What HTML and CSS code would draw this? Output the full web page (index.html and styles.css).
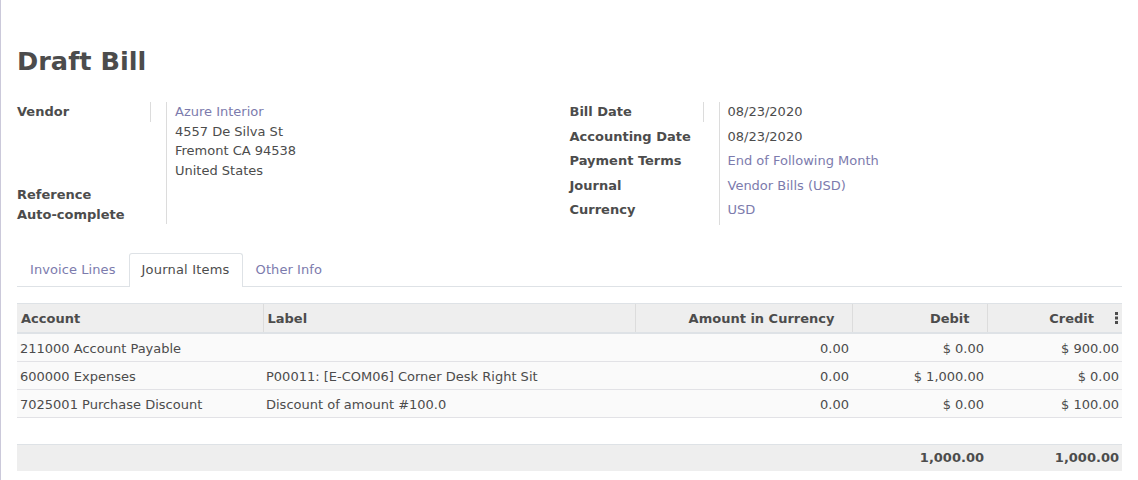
FILE: index.html
```html
<!DOCTYPE html>
<html>
<head>
<meta charset="utf-8">
<link rel="stylesheet" href="styles.css">
</head>
<body>
<div class="sheet">
  <h1 class="title">Draft Bill</h1>
  <div class="groups">
    <div class="group">
      <div class="lbl first">Vendor</div>
      <div class="val">
        <a class="link">Azure Interior</a><br>
        4557 De Silva St<br>
        Fremont CA 94538<br>
        United States
      </div>
      <div class="lbl last">Reference<br>Auto-complete</div>
      <div class="val last"></div>
    </div>
    <div class="group compact">
      <div class="lbl first">Bill Date</div>
      <div class="val">08/23/2020</div>
      <div class="lbl">Accounting Date</div>
      <div class="val">08/23/2020</div>
      <div class="lbl">Payment Terms</div>
      <div class="val"><a class="link">End of Following Month</a></div>
      <div class="lbl">Journal</div>
      <div class="val"><a class="link">Vendor Bills (USD)</a></div>
      <div class="lbl">Currency</div>
      <div class="val"><a class="link">USD</a></div>
    </div>
  </div>

  <ul class="tabs">
    <li class="tab">Invoice Lines</li>
    <li class="tab active">Journal Items</li>
    <li class="tab">Other Info</li>
  </ul>

  <table class="lines">
    <colgroup>
      <col class="c-account">
      <col class="c-label">
      <col class="c-amount">
      <col class="c-debit">
      <col class="c-credit">
    </colgroup>
    <thead>
      <tr>
        <th>Account</th>
        <th>Label</th>
        <th class="num">Amount in Currency</th>
        <th class="num">Debit</th>
        <th class="num last-col">Credit<svg class="dots" width="3" height="12" viewBox="0 0 3 12"><rect x="0" y="0" width="3" height="3" fill="#4c4c4c"/><rect x="0" y="4.5" width="3" height="3" fill="#4c4c4c"/><rect x="0" y="9" width="3" height="3" fill="#4c4c4c"/></svg></th>
      </tr>
    </thead>
    <tbody>
      <tr class="row">
        <td>211000 Account Payable</td>
        <td></td>
        <td class="num">0.00</td>
        <td class="num">$ 0.00</td>
        <td class="num">$ 900.00</td>
      </tr>
      <tr class="row">
        <td>600000 Expenses</td>
        <td>P00011: [E-COM06] Corner Desk Right Sit</td>
        <td class="num">0.00</td>
        <td class="num">$ 1,000.00</td>
        <td class="num">$ 0.00</td>
      </tr>
      <tr class="row">
        <td>7025001 Purchase Discount</td>
        <td>Discount of amount #100.0</td>
        <td class="num">0.00</td>
        <td class="num">$ 0.00</td>
        <td class="num">$ 100.00</td>
      </tr>
      <tr class="empty">
        <td colspan="5"></td>
      </tr>
    </tbody>
    <tfoot>
      <tr>
        <td></td>
        <td></td>
        <td></td>
        <td class="num">1,000.00</td>
        <td class="num">1,000.00</td>
      </tr>
    </tfoot>
  </table>
</div>
</body>
</html>
```

FILE: styles.css
```css
html, body {
  margin: 0;
  padding: 0;
  background: #ffffff;
}

body {
  border-left: 1px solid #cbc9da;
  min-height: 480px;
  box-sizing: border-box;
  font-family: "DejaVu Sans", Verdana, sans-serif;
  font-size: 13px;
  line-height: 19.5px;
  color: #4c4c4c;
}

.sheet {
  padding: 45px 16px 0 16px;
}

.title {
  margin: 0;
  font-size: 25.6px;
  line-height: 32px;
  font-weight: bold;
  color: #4c4c4c;
}

.groups {
  display: grid;
  grid-template-columns: 1fr 1fr;
  align-items: start;
  margin-top: 25px;
}

.group {
  display: grid;
  grid-template-columns: 134px 1fr;
  column-gap: 15px;
  align-items: start;
}

.lbl {
  font-weight: bold;
  padding-bottom: 5px;
}

.lbl.first {
  border-right: 1px solid #dcdcdc;
  padding-bottom: 0;
  margin-bottom: 5px;
}

.val {
  border-left: 1px solid #dcdcdc;
  padding-left: 8px;
  padding-bottom: 5px;
  align-self: stretch;
}

.val.last, .lbl.last {
  padding-bottom: 0;
}

.group.compact {
  grid-auto-rows: 24.5px;
}

.compact .lbl,
.compact .val {
  padding-bottom: 0;
}

.compact .lbl.first {
  margin-bottom: 0;
  height: 19.5px;
}

.link {
  color: #7c7bad;
  text-decoration: none;
}

.tabs {
  list-style: none;
  margin: 28px 0 0 0;
  padding: 0;
  display: flex;
  border-bottom: 1px solid #dee2e6;
}

.tab {
  padding: 6.5px 12px 7.5px 12px;
  border: 1px solid transparent;
  border-bottom: none;
  border-radius: 3px 3px 0 0;
  color: #7c7bad;
  margin-bottom: -1px;
  letter-spacing: 0.08px;
}

.tab.active {
  border-color: #dee2e6;
  background: #ffffff;
  color: #4c4c4c;
  letter-spacing: 0.2px;
}

.lines {
  margin-top: 16px;
  width: 100%;
  border-collapse: collapse;
  table-layout: fixed;
}

.c-account { width: 246px; }
.c-label { width: 372px; }
.c-amount { width: 217px; }
.c-debit { width: 135px; }
.c-credit { width: 135px; }

.lines th {
  background: #eeeeee;
  border-top: 1px solid #dee2e6;
  border-bottom: 2px solid #dee2e6;
  border-left: 1px solid #dcdcdc;
  padding: 5px 17px 3px 4px;
  text-align: left;
  font-weight: bold;
  white-space: nowrap;
}

.lines th:first-child {
  border-left: none;
  padding-left: 4px;
}

.lines th.num {
  text-align: right;
}

.lines th.last-col {
  padding-right: 4px;
}

.dots {
  margin-left: 21px;
  vertical-align: -1px;
}

.lines td {
  padding: 5px 3px 2.5px 3px;
  white-space: nowrap;
  overflow: hidden;
}

.lines td.num {
  text-align: right;
}

.row td {
  background: #fafafa;
  border-bottom: 1px solid #e2e2e6;
  height: 19.5px;
}

.empty td {
  height: 26px;
  padding: 0;
}

.lines tfoot td {
  background: #eeeeee;
  border-top: 1px solid #dee2e6;
  font-weight: bold;
  padding: 3.75px 3px 2.75px 3px;
}
```
